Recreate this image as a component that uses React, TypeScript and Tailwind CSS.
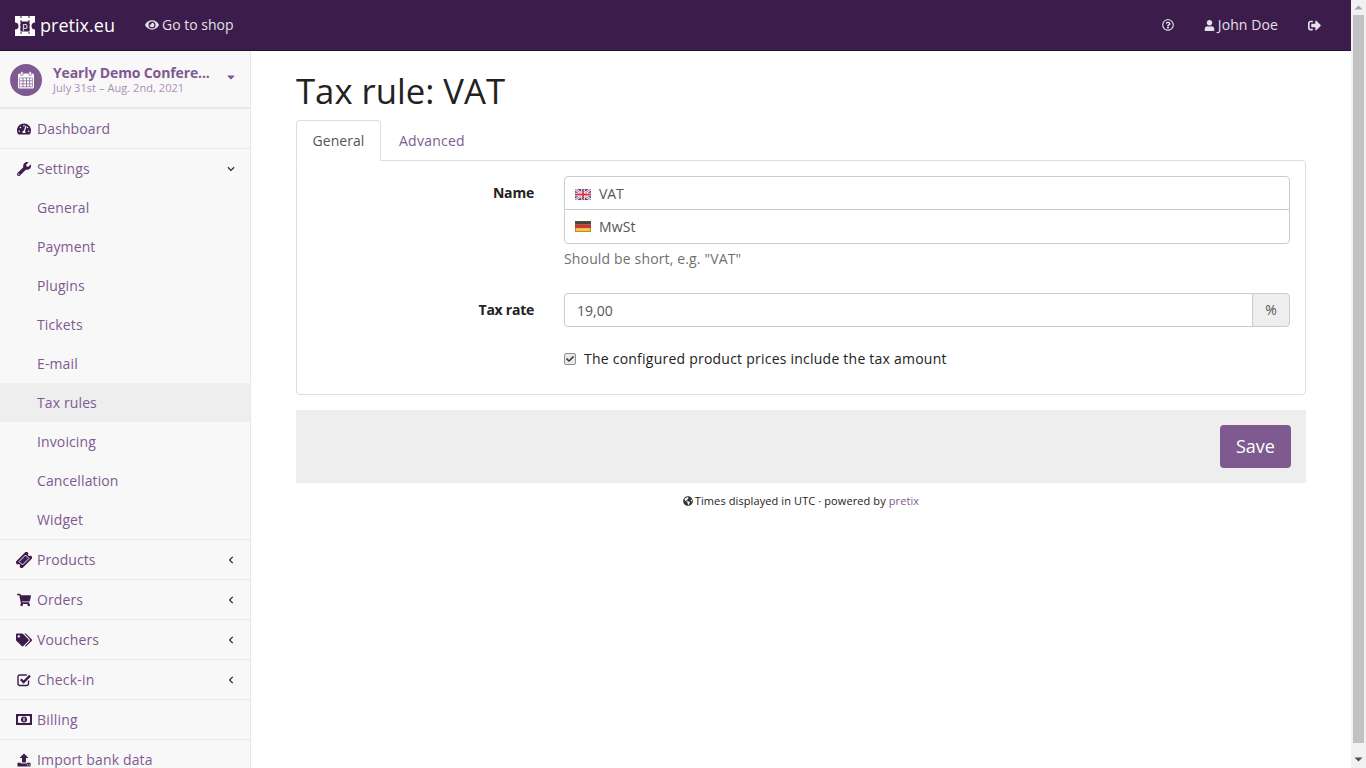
import React from "react";
import {
  FaTachometerAlt, FaWrench, FaShoppingCart, FaTags, FaEye, FaUser, FaSignOutAlt, FaRegQuestionCircle, FaGlobeAmericas, FaCaretDown, FaChevronLeft, FaChevronDown, FaCheck,
} from "react-icons/fa";

type IconT = React.ComponentType<{ className?: string }>;

const Logo = () => (
  <svg width="20" height="20" viewBox="0 0 20 20" className="mr-[5px] shrink-0 mt-[1px]">
    <path fill="#fff" d="M0 0h20v6.5a3.5 3.5 0 0 0 0 7V20H0v-6.5a3.5 3.5 0 0 0 0-7z" />
    <rect x="5.5" y="5.5" width="9" height="10" fill="#3b1c4a" />
    <path d="M6 0v20M14 0v20" stroke="#3b1c4a" strokeWidth="1" strokeDasharray="2 2" />
    <text x="7.2" y="13.2" fontSize="9" fill="#fff" fontFamily="'Open Sans'">p</text>
  </svg>
);

const CalendarIcon = () => (
  <svg width="18" height="18" viewBox="0 0 18 18" fill="none">
    <rect x="1" y="2.5" width="16" height="15" rx="1.5" fill="#fff" />
    <rect x="2.4" y="6.6" width="13.2" height="9.6" fill="#7f5a91" />
    <path fill="#fff" d="M3 7.2h2.6v2.3H3zM6.4 7.2H9v2.3H6.4zM9.8 7.2h2.6v2.3H9.8zM13.1 7.2H15v2.3h-1.9zM3 10.2h2.6v2.3H3zM6.4 10.2H9v2.3H6.4zM9.8 10.2h2.6v2.3H9.8zM13.1 10.2H15v2.3h-1.9zM3 13.2h2.6v2.4H3zM6.4 13.2H9v2.4H6.4zM9.8 13.2h2.6v2.4H9.8zM13.1 13.2H15v2.4h-1.9z" />
    <rect x="3.7" y="0.5" width="2.4" height="4" rx="1" fill="#fff" stroke="#7f5a91" strokeWidth="0.7" />
    <rect x="11.9" y="0.5" width="2.4" height="4" rx="1" fill="#fff" stroke="#7f5a91" strokeWidth="0.7" />
  </svg>
);

const TicketIcon: IconT = () => (
  <svg width="16" height="16" viewBox="0 0 16 16">
    <g transform="rotate(-45 8 8)">
      <path fill="#3b1c4a" d="M0 3.4h16v3a1.6 1.6 0 0 0 0 3.2v3H0v-3a1.6 1.6 0 0 0 0-3.2z" />
      <rect x="3.4" y="5.6" width="9.2" height="4.8" fill="none" stroke="#f8f8f8" strokeWidth="0.9" />
    </g>
  </svg>
);

const CheckSquareIcon: IconT = () => (
  <svg width="15" height="14" viewBox="0 0 15 14" fill="none">
    <path d="M11.5 7.5v3.2a1.8 1.8 0 0 1-1.8 1.8H2.8A1.8 1.8 0 0 1 1 10.7V3.8A1.8 1.8 0 0 1 2.8 2h7" stroke="#3b1c4a" strokeWidth="1.4" />
    <path d="M3.8 6.2l2.8 2.8L13 2.6" stroke="#3b1c4a" strokeWidth="2.3" />
  </svg>
);

const MoneyIcon: IconT = () => (
  <svg width="16" height="11" viewBox="0 0 16 11">
    <path fillRule="evenodd" fill="#3b1c4a" d="M0 0h16v11H0zM2.6 2A.7.7 0 0 1 2 2.6v5.8c.3 0 .6.3.6.6h10.8c0-.3.3-.6.6-.6V2.6a.7.7 0 0 1-.6-.6z" />
    <circle cx="8" cy="5.5" r="3" fill="#3b1c4a" />
    <rect x="7.4" y="3.8" width="1.2" height="3.4" fill="#f8f8f8" />
  </svg>
);

const UploadIcon: IconT = () => (
  <svg width="14" height="14" viewBox="0 0 14 14">
    <path fill="#3b1c4a" d="M7 0.5L11.5 5H9v4.4H5V5H2.5zM0.5 9.8H4v.8h6v-.8h3.5V13.5H.5z" />
    <rect x="10" y="11.5" width="1" height="1" fill="#f8f8f8" />
    <rect x="11.7" y="11.5" width="1" height="1" fill="#f8f8f8" />
  </svg>
);

const Uk = () => (
  <svg width="16" height="11" viewBox="0 0 16 11" className="shrink-0">
    <rect width="16" height="11" fill="#3b4fa0" />
    <path d="M0 0l16 11M16 0L0 11" stroke="#fff" strokeWidth="2.4" />
    <path d="M0 0l16 11M16 0L0 11" stroke="#d8344a" strokeWidth="0.8" />
    <path d="M8 0v11M0 5.5h16" stroke="#fff" strokeWidth="3.4" />
    <path d="M8 0v11M0 5.5h16" stroke="#d8344a" strokeWidth="1.8" />
  </svg>
);
const De = () => (
  <svg width="16" height="11" viewBox="0 0 16 11" className="shrink-0">
    <rect width="16" height="3.7" fill="#444" />
    <rect y="3.7" width="16" height="3.7" fill="#d5332c" />
    <rect y="7.4" width="16" height="3.6" fill="#f0c83a" />
    <rect x="0.5" y="0.5" width="15" height="10" fill="none" stroke="#6b5a2a" strokeOpacity="0.5" />
  </svg>
);

const TagsIcon: IconT = () => <FaTags className="text-[16px] text-[#3b1c4a]" />;

const main: [IconT, string, boolean, string][] = [
  [TicketIcon, "Products", true, "tracking-[0.05px]"],
  [FaShoppingCart as IconT, "Orders", true, "tracking-[0.1px]"],
  [TagsIcon, "Vouchers", true, "tracking-[0.15px]"],
  [CheckSquareIcon, "Check-in", true, "tracking-[0.2px]"],
  [MoneyIcon, "Billing", false, "tracking-[0.2px]"],
  [UploadIcon, "Import bank data", false, "tracking-[0.15px]"],
];
const subs = ["General", "Payment", "Plugins", "Tickets", "E-mail", "Tax rules", "Invoicing", "Cancellation", "Widget"];

function NavRow({ Icon, label, chevron, track }: { Icon: IconT; label: string; chevron?: boolean; track?: string }) {
  return (
    <div className="h-10 shrink-0 flex items-center border-b border-[#e7e7e7] pl-[16px] pr-[15px] text-[#7f5a91]">
      <span className="w-[16px] flex justify-center mr-[5px]"><Icon className="text-[14px] text-[#3b1c4a]" /></span>
      <span className={`flex-1 ${track ?? ""}`}>{label}</span>
      {chevron && <FaChevronLeft className="text-[8px] text-[#3b1c4a]" />}
    </div>
  );
}

export default function App() {
  return (
    <div className="h-screen overflow-hidden flex bg-white text-[14px] text-[#222] leading-5" style={{ fontFamily: "'Open Sans', sans-serif" }}>
      <div className="flex-1 min-w-0 flex flex-col">
        <header className="h-[51px] shrink-0 bg-[#3b1c4a] border-b border-[#23112c] flex items-center text-white">
          <div className="flex items-center pl-[15px] text-[18px]">
            <Logo />
            <span className="tracking-[0.03px]">pretix.eu</span>
          </div>
          <div className="flex items-center ml-[30px] text-[#e6e0e9]">
            <FaEye className="text-[14px] mr-[3px]" />
            <span>Go to shop</span>
          </div>
          <div className="ml-auto flex items-center text-[#e6e0e9]">
            <FaRegQuestionCircle className="text-[12px] mr-[30px]" />
            <FaUser className="text-[11px] mr-[3px]" />
            <span className="mr-[30px] tracking-[0.1px]">John Doe</span>
            <FaSignOutAlt className="text-[13px] mr-[30px]" />
          </div>
        </header>
        <div className="flex flex-1 min-h-0">
          <aside className="w-[251px] shrink-0 bg-[#f8f8f8] border-r border-[#e7e7e7] overflow-hidden">
            <div className="h-[58px] flex items-center pl-[10px] pr-[15px] pt-[2px] border-b-2 border-[#e7e7e7]">
              <div className="w-8 h-8 rounded-full bg-[#7f5a91] flex items-center justify-center mr-[11px] shrink-0">
                <CalendarIcon />
              </div>
              <div className="flex-1 min-w-0">
                <div className="font-bold text-[#7f5a91] leading-[15px] tracking-[-0.13px] whitespace-nowrap">Yearly Demo Confere...</div>
                <div className="text-[11px] text-[#a88fb4] leading-[15px] tracking-[0.05px] whitespace-nowrap">July 31st – Aug. 2nd, 2021</div>
              </div>
              <FaCaretDown className="text-[#7f5a91] text-[12px] -mt-[6px] -mr-[2px]" />
            </div>
            <NavRow Icon={FaTachometerAlt as IconT} label="Dashboard" track="tracking-[0.1px]" />
            <div className="h-[40px] flex items-center pl-[16px] pr-[15px] text-[#7f5a91]">
              <span className="w-[16px] flex justify-center mr-[5px]"><FaWrench className="text-[14px] text-[#3b1c4a]" /></span>
              <span className="flex-1 tracking-[0.1px]">Settings</span>
              <FaChevronDown className="text-[8px] text-[#3b1c4a]" />
            </div>
            <div className="border-b border-[#e7e7e7] -mt-px">
              {subs.map((s) => (
                <div key={s} className={`h-[39px] flex items-center pl-[37px] text-[#7f5a91] tracking-[0.12px] ${s === "Tax rules" ? "bg-[#eeeeee]" : ""}`}>{s}</div>
              ))}
            </div>
            {main.map(([I, l, c, t]) => <NavRow key={l} Icon={I} label={l} chevron={c} track={t} />)}
          </aside>
          <main className="flex-1 min-w-0 pl-[45px] pr-[45px]">
            <h1 className="text-[34.7px] leading-10 text-[#222] mt-5 mb-[9px]">Tax rule: VAT</h1>
            <div className="flex relative z-10 h-[41px]">
              <div className="h-[41px] w-[85px] flex items-center justify-center border border-[#ddd] border-b-white rounded-t bg-white text-[#555] tracking-[0.05px]">General</div>
              <div className="h-10 pl-[18px] flex items-center text-[#7f5a91] tracking-[0.25px] pt-[2px]">Advanced</div>
            </div>
            <section className="border border-[#ddd] rounded rounded-tl-none -mt-px pt-[15px] h-[235px]">
              <div className="flex">
                <label className="w-[237px] text-right font-bold pt-[7px] shrink-0 tracking-[-0.2px]">Name</label>
                <div className="ml-[30px] w-[726px]">
                  <div className="h-[34px] border border-[#ccc] rounded-t flex items-center pl-[10px] pt-[2px] text-[#555]"><Uk /><span className="ml-2 tracking-[-0.1px]">VAT</span></div>
                  <div className="h-[35px] -mt-px border border-[#ccc] rounded-b flex items-center pl-[10px] text-[#555]"><De /><span className="ml-2 tracking-[0.1px]">MwSt</span></div>
                  <p className="mt-[5px] text-[#6f6f6f] tracking-[0.15px]">Should be short, e.g. "VAT"</p>
                </div>
              </div>
              <div className="flex mt-[24px]">
                <label className="w-[237px] text-right font-bold pt-[7px] shrink-0 tracking-[-0.25px]">Tax rate</label>
                <div className="ml-[30px] w-[726px] flex h-[34px]">
                  <div className="flex-1 border border-[#ccc] rounded-l flex items-center pl-3 pt-[2px] text-[#555]">19,00</div>
                  <div className="w-[38px] -ml-px border border-[#ccc] rounded-r bg-[#eeeeee] flex items-center justify-center text-[#555]">%</div>
                </div>
              </div>
              <div className="flex mt-[22px]">
                <div className="w-[237px] shrink-0" />
                <div className="ml-[30px] flex items-center">
                  <span className="w-[12px] h-[12px] rounded-[2px] bg-[#e9e9e9] border border-[#8f8f8f] flex items-center justify-center mr-2 shrink-0">
                    <FaCheck className="text-[8px] text-[#333]" />
                  </span>
                  <span className="tracking-[0.23px]">The configured product prices include the tax amount</span>
                </div>
              </div>
            </section>
            <div className="mt-[15px] h-[73px] bg-[#eeeeee] flex items-center justify-end pr-[15px]">
              <button className="w-[71px] h-[43px] rounded bg-[#7f5a91] text-white text-[18px] -mt-px">Save</button>
            </div>
            <div className="mt-2 text-[11px] text-center leading-5 flex items-center justify-center tracking-[0.1px]">
              <FaGlobeAmericas className="text-[10px] mr-[2px] text-[#333]" />
              <span>Times displayed in UTC · powered by&nbsp;</span><span className="text-[#7f5a91]">pretix</span>
            </div>
          </main>
        </div>
      </div>
      <div className="w-[15px] shrink-0 bg-[#f1f1f1] flex flex-col items-center">
        <svg width="15" height="15" viewBox="0 0 15 15" className="shrink-0"><path d="M3.5 9.5L7.5 5.5l4 4z" fill="#a3a3a3" /></svg>
        <div className="w-[11px] flex-1 bg-[#c1c1c1]" />
        <svg width="15" height="25" viewBox="0 0 15 25" className="shrink-0"><path d="M3.5 14.5L7.5 18.5l4-4z" fill="#505050" /></svg>
      </div>
    </div>
  );
}
